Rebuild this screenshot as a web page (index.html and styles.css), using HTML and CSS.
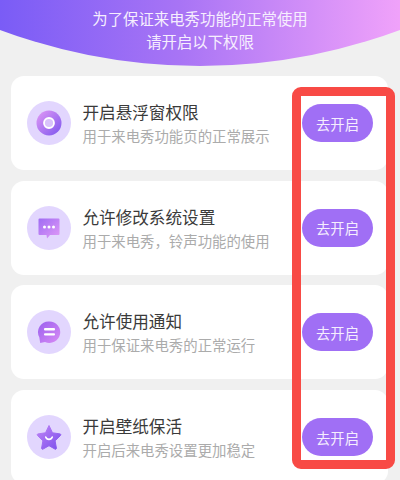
FILE: index.html
```html
<!DOCTYPE html>
<html lang="zh-CN">
<head>
<meta charset="utf-8">
<title>权限</title>
<link rel="stylesheet" href="styles.css">
</head>
<body>
<div class="page">
  <header class="hero">
    <p>为了保证来电秀功能的正常使用</p>
    <p>请开启以下权限</p>
  </header>
  <main class="list">
    <section class="card">
      <div class="badge">
        <svg viewBox="0 0 26 26" width="26" height="26"><defs><linearGradient id="g1" x1="0" y1="0" x2="1" y2="1"><stop offset="0" stop-color="#e29af5"/><stop offset="1" stop-color="#7c55ee"/></linearGradient></defs><circle cx="13" cy="13" r="12.5" fill="url(#g1)"/><circle cx="13" cy="13" r="5" fill="#d9c3fb" stroke="#fff" stroke-width="1.800"/></svg>
      </div>
      <div class="text"><h2>开启悬浮窗权限</h2><p>用于来电秀功能页的正常展示</p></div>
      <button class="go">去开启</button>
    </section>
    <section class="card">
      <div class="badge">
        <svg viewBox="0 0 24 24" width="24" height="24"><defs><linearGradient id="g2" x1="0" y1="0" x2="1" y2="1"><stop offset="0" stop-color="#9f6cf3"/><stop offset="1" stop-color="#e19af7"/></linearGradient></defs><path d="M2.500 2.500h19a1 1 0 0 1 1 1V18a1 1 0 0 1-1 1H13l-3 3.500L9.500 19h-7a1 1 0 0 1-1-1V3.500a1 1 0 0 1 1-1z" fill="url(#g2)"/><circle cx="7.500" cy="11" r="1.500" fill="#fff"/><circle cx="12" cy="11" r="1.500" fill="#fff"/><circle cx="16.500" cy="11" r="1.500" fill="#fff"/></svg>
      </div>
      <div class="text"><h2>允许修改系统设置</h2><p>用于来电秀，铃声功能的使用</p></div>
      <button class="go">去开启</button>
    </section>
    <section class="card">
      <div class="badge">
        <svg viewBox="0 0 24 24" width="24" height="24"><defs><linearGradient id="g3" x1="0" y1="0" x2="1" y2="1"><stop offset="0" stop-color="#9a60ee"/><stop offset="1" stop-color="#d98cf5"/></linearGradient></defs><path d="M12.500 1.500a10.700 10.700 0 1 1-4.500 20.400L3.200 23 2.300 17.200A10.700 10.700 0 0 1 12.500 1.500z" fill="url(#g3)"/><rect x="7" y="8" width="11" height="2.400" rx="1" fill="#fff"/><rect x="7" y="13.200" width="11" height="2.400" rx="1" fill="#fff"/></svg>
      </div>
      <div class="text"><h2>允许使用通知</h2><p>用于保证来电秀的正常运行</p></div>
      <button class="go">去开启</button>
    </section>
    <section class="card">
      <div class="badge">
        <svg viewBox="0 0 28 28" width="28" height="28"><defs><linearGradient id="g4" x1="0" y1="0" x2="1" y2="1"><stop offset="0" stop-color="#c184f6"/><stop offset="1" stop-color="#7a50ec"/></linearGradient></defs><path d="M14 2.500l3.500 7.300 7.500 1.100a.9.9 0 0 1 .5 1.600l-5.400 5.300 1.300 7.400a.9.9 0 0 1-1.400.9L14 22.700l-6 3.400a.9.9 0 0 1-1.400-.9l1.300-7.400-5.400-5.300a.9.9 0 0 1 .5-1.600l7.500-1.100z" fill="url(#g4)" stroke="url(#g4)" stroke-width="1" stroke-linejoin="round"/><path d="M10.700 14a3.500 3.500 0 0 0 6.600 0" fill="none" stroke="#fff" stroke-width="1.600" stroke-linecap="round"/></svg>
      </div>
      <div class="text"><h2>开启壁纸保活</h2><p>开启后来电秀设置更加稳定</p></div>
      <button class="go">去开启</button>
    </section>
  </main>
  <div class="marker"></div>
</div>
</body>
</html>
```
FILE: styles.css
```css
* { box-sizing: border-box; }
html, body { margin: 0; padding: 0; }
body {
  width: 400px;
  height: 480px;
  overflow: hidden;
  background: #f0f0f0;
  font-family: "Noto Sans CJK SC", "Noto Sans", sans-serif;
}
.page { position: relative; width: 400px; height: 480px; overflow: hidden; }
.hero {
  height: 66px;
  padding-top: 7px;
  background: linear-gradient(90deg, #7a5cf6 0%, #a874f5 45%, #f0a2fa 100%);
  clip-path: circle(573px at 200px -507px);
  color: #f6eefe;
  text-align: center;
  font-size: 15.4px;
  line-height: 23px;
}
.hero p { margin: 0; }
.list {
  display: flex;
  flex-direction: column;
  gap: 10.7px;
  padding: 10px 12px 0 11px;
}
.card {
  flex: none;
  display: flex;
  align-items: center;
  height: 94px;
  padding: 0 15px 0 16px;
  background: #fff;
  border-radius: 13px;
}
.badge {
  flex: none;
  display: flex;
  align-items: center;
  justify-content: center;
  width: 44px;
  height: 44px;
  border-radius: 50%;
  background: #e2d6fe;
}
.text { flex: 1; min-width: 0; margin-left: 11.5px; padding-top: 1px; }
.text h2 {
  margin: 0 0 1px;
  font-size: 16.6px;
  font-weight: 400;
  line-height: 24px;
  color: #3a3a3a;
}
.text p {
  margin: 0;
  font-size: 14.4px;
  line-height: 22px;
  color: #ababab;
  white-space: nowrap;
}
.go {
  flex: none;
  width: 71px;
  height: 38px;
  border: 0;
  border-radius: 19px;
  background: #a06ff5;
  color: #f5eefe;
  font: inherit;
  font-size: 14.3px;
  padding: 0;
}
.marker {
  position: absolute;
  left: 292px;
  top: 87px;
  width: 103px;
  height: 382px;
  border: 9.5px solid #f84a45;
  border-radius: 9px;
}
```
